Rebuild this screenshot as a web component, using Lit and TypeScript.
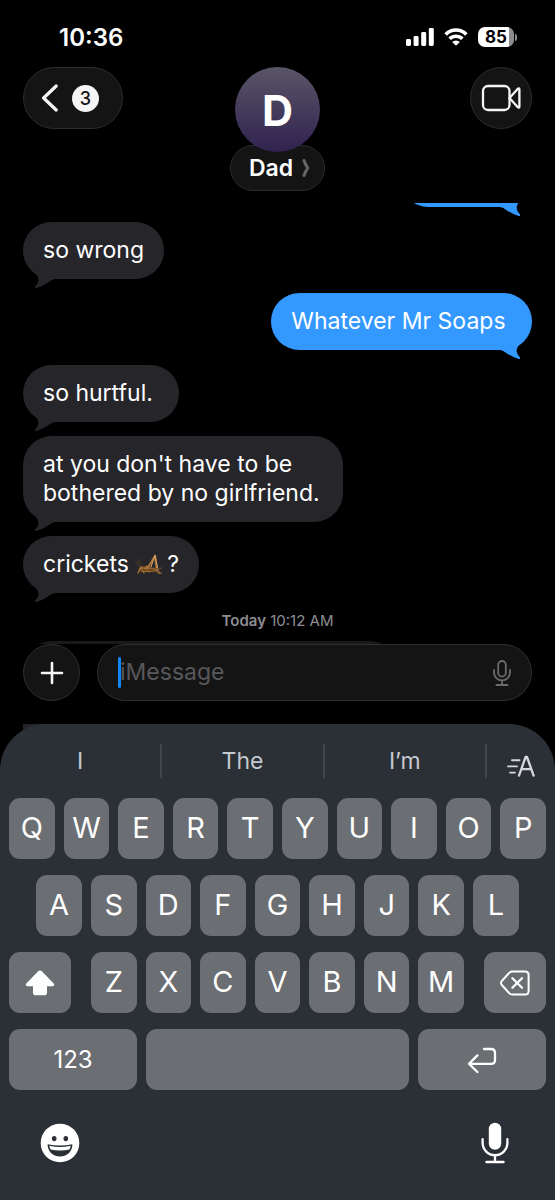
import { LitElement, html, css, nothing } from "lit";
import { customElement, property } from "lit/decorators.js";

interface Message {
  from: "me" | "them";
  text: string;
  cricket?: boolean;
}

const MESSAGES: Message[] = [
  { from: "them", text: "so wrong" },
  { from: "me", text: "Whatever Mr Soaps\u00a0" },
  { from: "them", text: "so hurtful.\u00a0" },
  { from: "them", text: "at you don't have to be bothered by no girlfriend." },
  { from: "them", text: "crickets ", cricket: true },
];

const SUGGESTIONS = ["I", "The", "I’m"];

@customElement("status-bar")
class StatusBar extends LitElement {
  static styles = css`
    :host {
      display: flex;
      justify-content: space-between;
      align-items: center;
      height: 67px;
      padding: 7px 38px 0 59px;
      box-sizing: border-box;
      color: #fff;
    }
    .time {
      font-size: 24px;
      font-weight: 600;
    }
    .icons {
      display: flex;
      align-items: center;
      gap: 10px;
    }
    .battery {
      display: flex;
      align-items: center;
      gap: 1px;
    }
    .cell {
      display: grid;
      place-items: center;
      width: 36px;
      height: 20px;
      border-radius: 7px;
      background: linear-gradient(90deg, #fff 31px, #8c8c8c 31px);
      color: #000;
      font-size: 17px;
      font-weight: 700;
      line-height: 20px;
    }
    .nub {
      width: 2px;
      height: 7px;
      border-radius: 0 2px 2px 0;
      background: #8c8c8c;
    }
  `;

  render() {
    return html`
      <time class="time">10:36</time>
      <div class="icons">
        <svg width="28" height="18" viewBox="0 0 28 18" fill="#fff" role="img" aria-label="Signal">
          <rect x="0" y="11" width="5" height="7" rx="1.4" />
          <rect x="7.6" y="8" width="5" height="10" rx="1.4" />
          <rect x="15.2" y="4" width="5" height="14" rx="1.4" />
          <rect x="22.8" y="0" width="5" height="18" rx="1.4" />
        </svg>
        <svg width="24" height="18" viewBox="0 0 24 18" role="img" aria-label="Wi-Fi">
          <path d="M1.6 6.4A14.6 14.6 0 0 1 22.4 6.4" fill="none" stroke="#fff" stroke-width="3.5" />
          <path d="M5.6 10.8A9 9 0 0 1 18.4 10.8" fill="none" stroke="#fff" stroke-width="3.5" />
          <path d="M8.2 14.1A5.4 5.4 0 0 1 15.8 14.1L12 17.8Z" fill="#fff" />
        </svg>
        <div class="battery" role="img" aria-label="Battery">
          <span class="cell">85</span>
          <span class="nub"></span>
        </div>
      </div>
    `;
  }
}

@customElement("chat-header")
class ChatHeader extends LitElement {
  static styles = css`
    :host {
      display: grid;
      grid-template-columns: 1fr auto 1fr;
      align-items: start;
      padding: 0 23px 12px;
    }
    button {
      font: inherit;
      color: #fff;
      padding: 0;
      background: #141414;
      border: 1px solid #2c2c2d;
      box-sizing: border-box;
    }
    .back {
      display: flex;
      align-items: center;
      gap: 13px;
      width: 100px;
      height: 62px;
      padding-left: 17px;
      border-radius: 31px;
    }
    .count {
      display: grid;
      place-items: center;
      width: 27px;
      height: 27px;
      border-radius: 50%;
      background: #f5f5f5;
      color: #141414;
      font-size: 18px;
      font-weight: 500;
    }
    .contact {
      display: flex;
      flex-direction: column;
      align-items: center;
    }
    .avatar {
      display: grid;
      place-items: center;
      z-index: 1;
      width: 85px;
      height: 85px;
      border-radius: 50%;
      background: linear-gradient(#5a5568, #30224f);
      color: #fff;
      font-size: 43px;
      font-weight: 700;
    }
    .name {
      display: flex;
      align-items: center;
      gap: 9px;
      height: 46px;
      margin-top: -7px;
      padding: 0 14px 0 18px;
      border-radius: 23px;
      font-size: 23px;
      font-weight: 600;
    }
    .video {
      display: grid;
      place-items: center;
      justify-self: end;
      width: 62px;
      height: 62px;
      border-radius: 50%;
    }
  `;

  render() {
    return html`
      <button class="back" aria-label="Back, 3 unread">
        <svg width="18" height="28" viewBox="0 0 18 28" fill="none" stroke="#f5f5f5" stroke-width="3.2" stroke-linecap="round" stroke-linejoin="round">
          <path d="M15.2 2L2.6 14L15.2 26" />
        </svg>
        <span class="count">3</span>
      </button>
      <div class="contact">
        <div class="avatar">D</div>
        <button class="name">
          Dad
          <svg width="8" height="20" viewBox="0 0 8 20" fill="none" stroke="#67676a" stroke-width="3" stroke-linecap="round" stroke-linejoin="round">
            <path d="M2 2.5Q3 6 5.8 10Q3 14 2 17.5" />
          </svg>
        </button>
      </div>
      <button class="video" aria-label="FaceTime">
        <svg width="40" height="28" viewBox="0 0 40 28" fill="none" stroke="#f5f5f5" stroke-width="2.3" stroke-linejoin="round">
          <rect x="2" y="2" width="26.5" height="24" rx="5" />
          <path d="M28.5 14L36.6 5Q38.4 3.4 38.4 5.6V22.4Q38.4 24.6 36.6 23L28.5 14Z" />
        </svg>
      </button>
    `;
  }
}

@customElement("chat-bubble")
class ChatBubble extends LitElement {
  @property({ type: Boolean, reflect: true }) sent = false;
  @property({ type: Boolean, reflect: true }) blank = false;

  static styles = css`
    :host {
      display: block;
      position: relative;
      flex: none;
      align-self: flex-start;
      box-sizing: border-box;
      max-width: 320px;
      min-height: 57px;
      padding: 14px 20px;
      border-radius: 29px;
      background: #26252a;
      color: #fff;
      font-size: 23px;
      line-height: 29px;
    }
    :host([sent]) {
      align-self: flex-end;
      background: #3398ff;
    }
    :host([blank]) {
      width: 132px;
    }
    .tail {
      position: absolute;
      left: 8px;
      bottom: -10px;
      fill: #26252a;
    }
    :host([sent]) .tail {
      left: auto;
      right: 8px;
      fill: #3398ff;
      transform: scaleX(-1);
    }
  `;

  render() {
    return html`<slot></slot>
      <svg class="tail" width="26" height="22" viewBox="0 0 26 22" aria-hidden="true">
        <path d="M1 3Q7 8 7.4 12.4Q7.6 16.2 4 19.4Q3.2 21.4 5.4 21Q11 19.4 17 15.4Q21 12.4 24 12V3Z" />
      </svg>`;
  }
}

@customElement("chat-thread")
class ChatThread extends LitElement {
  static styles = css`
    :host {
      display: flex;
      flex-direction: column;
      justify-content: flex-end;
      gap: 14px;
      flex: 1 0 0;
      padding: 0 23px;
      overflow: hidden;
    }
    chat-bubble[sent] + chat-bubble {
      margin-top: 1px;
    }
    .cricket {
      vertical-align: -3px;
      margin-right: 3px;
    }
    .stamp {
      margin: 4px 0 -4px;
      color: #8d8d93;
      font-size: 15px;
      line-height: 20px;
      text-align: center;
    }
    .day {
      font-weight: 600;
    }
    .next {
      flex: none;
      height: 3px;
      overflow: hidden;
    }
    .next-bubble {
      width: 375px;
      height: 57px;
      border-radius: 29px;
      background: #19191a;
    }
  `;

  private cricket() {
    return html`<svg class="cricket" width="29" height="22" viewBox="0 0 29 22" fill="none" stroke-linecap="round" stroke-linejoin="round" role="img" aria-label="cricket">
      <path d="M4 15Q8 12 13 14L21 15Q23 18 19 19L7 19Q3 18 4 15Z" fill="#8a5c2b" />
      <path d="M5 15L1 8M7 14L3 6" stroke="#5b4024" stroke-width="0.8" />
      <path d="M3 20L6 14L9 20M8 18L12 13L14 19" stroke="#a87438" stroke-width="1.4" />
      <path d="M11 18L20 3L22 18L25 20" stroke="#a87438" stroke-width="2.2" />
      <path d="M16 14L20 2L23 17" stroke="#d0a066" stroke-width="1" />
      <path d="M20 16L27 15M21 18L27 20" stroke="#6a4826" stroke-width="1" />
      <path d="M6 17H18" stroke="#4d3115" stroke-width="1.2" />
    </svg>`;
  }

  render() {
    return html`
      <chat-bubble sent blank></chat-bubble>
      ${MESSAGES.map(
        (m, i) => html`<chat-bubble ?sent=${m.from === "me"} style=${nothing}>${m.text}${m.cricket ? html`${this.cricket()}?` : nothing}</chat-bubble>`
      )}
      <div class="stamp"><span class="day">Today</span> 10:12 AM</div>
      <div class="next"><div class="next-bubble"></div></div>
    `;
  }
}

@customElement("chat-composer")
class ChatComposer extends LitElement {
  static styles = css`
    :host {
      display: flex;
      gap: 17px;
      padding: 0 23px 23px;
    }
    .add,
    .field {
      height: 57px;
      box-sizing: border-box;
      border: 1px solid #2f2f30;
      background: #141414;
    }
    .add {
      display: grid;
      place-items: center;
      flex: none;
      width: 57px;
      padding: 0;
      border-radius: 50%;
    }
    .field {
      position: relative;
      display: flex;
      align-items: center;
      flex: 1;
      min-width: 0;
      padding: 0 20px 0 22px;
      border-radius: 29px;
    }
    .text {
      flex: 1;
      min-width: 0;
      padding: 0;
      border: 0;
      outline: 0;
      background: none;
      color: #fff;
      font: inherit;
      font-size: 23px;
      line-height: 29px;
    }
    .text::placeholder {
      color: #58585b;
      opacity: 1;
    }
    .caret {
      position: absolute;
      left: 20px;
      top: 12px;
      width: 3px;
      height: 31px;
      border-radius: 2px;
      background: #1388f5;
    }
    .dictate {
      display: grid;
      padding: 0;
      border: 0;
      background: none;
    }
  `;

  render() {
    return html`
      <button class="add" aria-label="Add">
        <svg width="24" height="24" viewBox="0 0 24 24" stroke="#f5f5f5" stroke-width="2.6" stroke-linecap="round">
          <path d="M12 2V22M2 12H22" />
        </svg>
      </button>
      <div class="field">
        <input class="text" type="text" placeholder="iMessage" aria-label="iMessage" />
        <span class="caret"></span>
        <button class="dictate" aria-label="Dictate">
          <svg width="18" height="26" viewBox="0 0 18 26" fill="none" stroke="#6b6b6d" stroke-width="1.8" stroke-linecap="round">
            <rect x="5.2" y="1" width="7.6" height="15.6" rx="3.8" />
            <path d="M1 10V12.4A8 8 0 0 0 17 12.4V10M9 20.4V25M3.4 25H14.6" />
          </svg>
        </button>
      </div>
    `;
  }
}

@customElement("soft-keyboard")
class SoftKeyboard extends LitElement {
  static styles = css`
    :host {
      display: block;
      position: relative;
      color: #fff;
    }
    .behind {
      position: absolute;
      left: 23px;
      top: 0;
      width: 60px;
      height: 8px;
      background: #222428;
    }
    .panel {
      position: relative;
      padding: 0 9px 36px;
      border-radius: 46px 46px 0 0;
      background: #2b2f36;
    }
    button {
      padding: 0;
      border: 0;
      background: none;
      color: inherit;
      font: inherit;
    }
    .suggestions {
      display: flex;
      align-items: center;
      height: 74px;
      margin: 0 -9px;
    }
    .word,
    .format {
      height: 34px;
      line-height: 34px;
    }
    .word {
      flex: 1;
      border-right: 2px solid #42464c;
      color: #c5c8cf;
      font-size: 23px;
    }
    .format {
      display: grid;
      place-items: center;
      flex: 0 0 68px;
      padding-top: 9px;
    }
    .keys {
      display: flex;
      flex-direction: column;
      gap: 16px;
    }
    .row {
      display: flex;
      justify-content: center;
      gap: 9px;
    }
    .spread {
      justify-content: space-between;
    }
    .letters {
      display: flex;
      justify-content: center;
      gap: 9px;
      width: calc(70% - 3px);
    }
    .key {
      display: grid;
      place-items: center;
      height: 61px;
      border-radius: 11px;
      background: #6b6e73;
    }
    .letter {
      flex: 0 0 calc((100% - 81px) / 10);
      padding-bottom: 3px;
      font-size: 29px;
    }
    .letters .letter {
      flex: 1 1 0;
    }
    .side {
      flex: none;
      width: 62px;
    }
    .wide {
      flex: none;
      width: 128px;
      font-size: 24px;
    }
    .space {
      flex: 1;
    }
    .tools {
      display: flex;
      justify-content: space-between;
      align-items: center;
      padding: 32px 37px 0 31px;
    }
    .tools svg {
      display: block;
    }
  `;

  private letters(chars: string) {
    return [...chars].map((c) => html`<button class="key letter">${c}</button>`);
  }

  render() {
    return html`
      <div class="behind"></div>
      <div class="panel">
        <div class="suggestions">
          ${SUGGESTIONS.map((s) => html`<button class="word">${s}</button>`)}
          <button class="format" aria-label="Text formatting">
            <svg width="28" height="22" viewBox="0 0 28 22" fill="none" stroke="#d5d7dc" stroke-width="1.9" stroke-linecap="round" stroke-linejoin="round">
              <path d="M5 5.2H12.5M1 11.4H10M3 17.6H8" />
              <path d="M12 20.6L18.6 2H20L26.6 20.6M14.4 14.2H24.2" stroke-width="2.3" />
            </svg>
          </button>
        </div>
        <div class="keys">
          <div class="row">${this.letters("QWERTYUIOP")}</div>
          <div class="row">${this.letters("ASDFGHJKL")}</div>
          <div class="row spread">
            <button class="key side" aria-label="Shift">
              <svg width="30" height="26" viewBox="0 0 30 26" fill="#fff">
                <path d="M13.2 1.3Q15 -.3 16.8 1.3L28.7 13.4Q30.3 16 27.6 16.2H22V22.4Q22 25.2 19.2 25.2H10.8Q8 25.2 8 22.4V16.2H2.4Q-.3 16 1.3 13.4Z" />
              </svg>
            </button>
            <div class="letters">${this.letters("ZXCVBNM")}</div>
            <button class="key side" aria-label="Delete">
              <svg width="30" height="26" viewBox="0 0 30 26" fill="none" stroke="#fff" stroke-width="2" stroke-linecap="round" stroke-linejoin="round">
                <path d="M12.4 1.4H25Q28.6 1.4 28.6 5V21Q28.6 24.6 25 24.6H12.4Q10.6 24.6 9.4 23.4L1.8 15Q.2 13 1.8 11L9.4 2.6Q10.6 1.4 12.4 1.4Z" />
                <path d="M12.4 8.2L22 17.8M22 8.2L12.4 17.8" stroke-width="2.3" />
              </svg>
            </button>
          </div>
          <div class="row">
            <button class="key wide">123</button>
            <button class="key space" aria-label="Space"></button>
            <button class="key wide" aria-label="Return">
              <svg width="30" height="26" viewBox="0 0 30 26" fill="none" stroke="#fff" stroke-width="2.3" stroke-linecap="round" stroke-linejoin="round">
                <path d="M17 2H24Q28 2 28 6V13Q28 16.8 24 16.8H2M10.4 8.4L2 16.8L10.4 25" />
              </svg>
            </button>
          </div>
        </div>
        <div class="tools">
          <button aria-label="Emoji">
            <svg width="40" height="40" viewBox="0 0 40 40">
              <circle cx="20" cy="20" r="19.3" fill="#fff" />
              <ellipse cx="14.2" cy="15.6" rx="2.3" ry="2.7" fill="#2b2f36" />
              <ellipse cx="25.8" cy="15.6" rx="2.3" ry="2.7" fill="#2b2f36" />
              <path d="M7.6 21.2Q20 24 32.4 21.2Q32.4 27 28.4 30.4Q25 33.4 20 33.4Q15 33.4 11.6 30.4Q7.6 27 7.6 21.2Z" fill="#2b2f36" />
              <path d="M9.4 22.8Q20 25.2 30.6 22.8Q30.4 25 29.4 26.4Q20 28.6 10.6 26.4Q9.6 25 9.4 22.8Z" fill="#fff" />
            </svg>
          </button>
          <button aria-label="Dictation">
            <svg width="28" height="42" viewBox="0 0 28 42" fill="none" stroke="#fff" stroke-width="2.3" stroke-linecap="round">
              <rect x="7.8" y="0.8" width="12.4" height="27" rx="6.2" fill="#fff" stroke="none" />
              <path d="M1.6 17.2V20.8A12.4 12.4 0 0 0 26.4 20.8V17.2M14 33.4V40M5.4 40H22.6" />
            </svg>
          </button>
        </div>
      </div>
    `;
  }
}

@customElement("app-root")
class AppRoot extends LitElement {
  static styles = css`
    :host {
      display: flex;
      flex-direction: column;
      min-height: 100vh;
      background: #000;
      color: #fff;
      font-family: Inter, "Liberation Sans", sans-serif;
    }
  `;

  render() {
    return html`
      <status-bar></status-bar>
      <chat-header></chat-header>
      <chat-thread></chat-thread>
      <chat-composer></chat-composer>
      <soft-keyboard></soft-keyboard>
    `;
  }
}
